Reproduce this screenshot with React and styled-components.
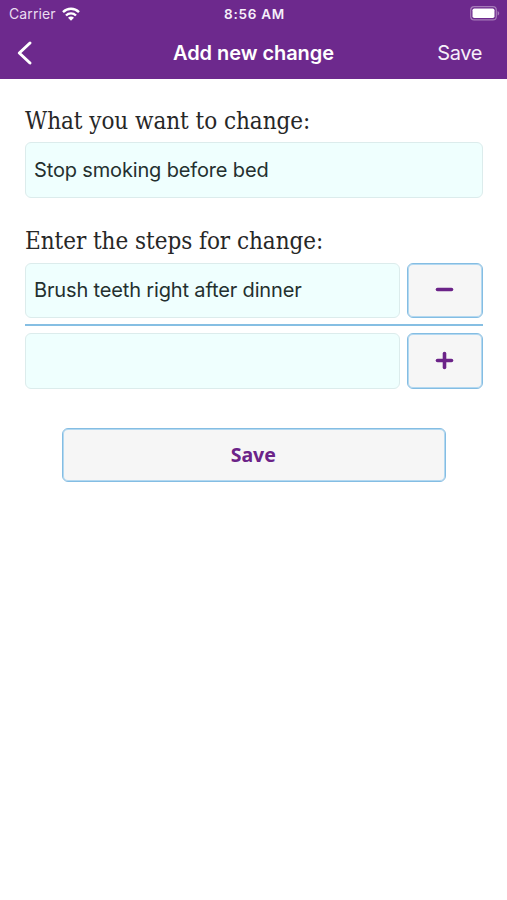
import React, { useState } from "react";
import styled, { createGlobalStyle } from "styled-components";

const GlobalStyle = createGlobalStyle`
  * {
    box-sizing: border-box;
  }

  body {
    margin: 0;
    background: #fff;
    font-family: Inter, "Liberation Sans", sans-serif;
  }

  button, input {
    font-family: inherit;
    margin: 0;
  }
`;

const Screen = styled.div`
  display: flex;
  flex-direction: column;
  min-height: 900px;
  background: #fff;
`;

// Purple area: status bar + navigation
const TopArea = styled.header`
  height: 79px;
  background: #6d298d;
  color: #fff;
`;

const StatusBar = styled.div`
  display: grid;
  grid-template-columns: 1fr auto 1fr;
  align-items: center;
  height: 27px;
  padding: 0 7px 0 9px;
  font-size: 14px;
`;

const Carrier = styled.div`
  display: flex;
  align-items: center;
  gap: 6px;
  color: #eadcf0;
  letter-spacing: 0.1px;
`;

const Clock = styled.div`
  font-weight: 600;
  font-size: 13.5px;
  letter-spacing: 0.75px;
  color: #f6effa;
`;

const BatteryIcon = styled.svg`
  justify-self: end;
  display: block;
`;

const NavBar = styled.nav`
  display: grid;
  grid-template-columns: 1fr auto 1fr;
  align-items: center;
  height: 51px;
  padding: 0 25px 0 16px;
`;

const BackButton = styled.button`
  display: flex;
  justify-self: start;
  padding: 0;
  border: none;
  background: none;
  cursor: pointer;
`;

const Title = styled.h1`
  margin: 0 0 0 -9px;
  transform: translateX(9px);
  font-size: 20px;
  font-weight: 600;
  letter-spacing: -0.05px;
  white-space: nowrap;
`;

const NavSave = styled.button`
  justify-self: end;
  padding: 0;
  border: none;
  background: none;
  color: #f6effa;
  font-size: 20px;
  letter-spacing: -0.4px;
  cursor: pointer;
`;

const Form = styled.form`
  display: flex;
  flex-direction: column;
  padding: 25px 24.5px 0 25px;
`;

const Label = styled.label`
  height: 34px;
  margin: ${({ $spaced }) => ($spaced ? "26px 0 5px" : "0 0 4px")};
  color: #272727;
  font-family: "DejaVu Serif Condensed", "DejaVu Serif", serif;
  font-stretch: condensed;
  font-size: 24px;
  letter-spacing: -0.05px;
  line-height: 34px;
  white-space: nowrap;
`;

const TextInput = styled.input`
  flex: 1;
  width: 100%;
  min-width: 0;
  height: 55.5px;
  flex-basis: auto;
  padding: 0 8px;
  border: 1px solid #dcecec;
  border-radius: 6px;
  outline: none;
  background: #effffe;
  color: #24302f;
  font-size: 20px;
  letter-spacing: -0.15px;
`;

const StepRow = styled.div`
  display: flex;
  gap: 7px;
  height: 55.5px;
`;

const Divider = styled.hr`
  width: 100%;
  height: 2px;
  margin: 6px 0 7px;
  border: none;
  background: #86bfe3;
`;

const OutlineButton = styled.button`
  display: flex;
  align-items: center;
  justify-content: center;
  border: 1px solid #84bde3;
  border-radius: 6px;
  background: #f6f6f6;
  box-shadow: inset 0 0 0 1px #b3d8f0;
  color: #6b2388;
  cursor: pointer;
`;

const StepButton = styled(OutlineButton)`
  flex: none;
  width: 75.5px;
  height: 55.5px;
  padding: 0 1px 1px 0;
`;

const SaveButton = styled(OutlineButton)`
  align-self: center;
  width: 384.5px;
  height: 54px;
  margin-top: 39px;
  padding: 0 1px 0 0;
  font-family: "Noto Sans", sans-serif;
  font-size: 19.5px;
  font-weight: 700;
`;

const WifiIcon = () => (
  <svg width="18" height="14" viewBox="0 0 18 14" fill="none" stroke="#fff" strokeWidth="2.4">
    <path d="M1 5.1C5.5 0.7 12.5 0.7 17 5.1" />
    <path d="M4 8.5C6.8 5.7 11.2 5.7 14 8.5" />
    <path d="M9 13.7L6 10.8C7.6 9.2 10.4 9.2 12 10.8Z" fill="#fff" stroke="none" />
  </svg>
);

const Battery = () => (
  <BatteryIcon width="30" height="15" viewBox="0 0 30 15">
    <rect x="0.7" y="0.7" width="25.6" height="13.2" rx="3.5" fill="none" stroke="#a67bb9" strokeWidth="1.2" />
    <rect x="2.5" y="2.5" width="22" height="9.6" rx="1.8" fill="#fff" />
    <path d="M27.6 5C29.7 5.8 29.7 8.8 27.6 9.6Z" fill="#a67bb9" />
  </BatteryIcon>
);

const BackIcon = () => (
  <svg width="17" height="26" viewBox="0 0 17 26" fill="none" stroke="#fff" strokeWidth="3" strokeLinecap="round" strokeLinejoin="round">
    <path d="M14 3L3.3 13L14 23" />
  </svg>
);

const StepIcon = ({ plus }) => (
  <svg width="19" height="19" viewBox="0 0 19 19" fill="none" stroke="#6b2388" strokeWidth="3.6" strokeLinecap="round">
    <path d="M2.5 9.5H16.5" />
    {plus && <path d="M9.5 2.5V16.5" />}
  </svg>
);

const App = () => {
  const [change, setChange] = useState("Stop smoking before bed");
  const [steps, setSteps] = useState(["Brush teeth right after dinner"]);
  const [newStep, setNewStep] = useState("");

  const updateStep = (index, value) => {
    setSteps(steps.map((step, i) => (i === index ? value : step)));
  };

  const removeStep = (index) => {
    setSteps(steps.filter((_, i) => i !== index));
  };

  const addStep = () => {
    if (!newStep.trim()) return;
    setSteps([...steps, newStep]);
    setNewStep("");
  };

  return (
    <Screen>
      <GlobalStyle />
      <TopArea>
        <StatusBar>
          <Carrier>
            Carrier
            <WifiIcon />
          </Carrier>
          <Clock>8:56 AM</Clock>
          <Battery />
        </StatusBar>
        <NavBar>
          <BackButton type="button" aria-label="Back">
            <BackIcon />
          </BackButton>
          <Title>Add new change</Title>
          <NavSave type="submit" form="change-form">Save</NavSave>
        </NavBar>
      </TopArea>

      <Form id="change-form" onSubmit={(e) => e.preventDefault()}>
        <Label htmlFor="change">What you want to change:</Label>
        <TextInput id="change" value={change} onChange={(e) => setChange(e.target.value)} />

        <Label htmlFor="new-step" $spaced>Enter the steps for change:</Label>
        {steps.map((step, index) => (
          <React.Fragment key={index}>
            <StepRow>
              <TextInput value={step} onChange={(e) => updateStep(index, e.target.value)} />
              <StepButton type="button" aria-label="Remove step" onClick={() => removeStep(index)}>
                <StepIcon />
              </StepButton>
            </StepRow>
            <Divider />
          </React.Fragment>
        ))}
        <StepRow>
          <TextInput id="new-step" value={newStep} onChange={(e) => setNewStep(e.target.value)} />
          <StepButton type="button" aria-label="Add step" onClick={addStep}>
            <StepIcon plus />
          </StepButton>
        </StepRow>

        <SaveButton type="submit">Save</SaveButton>
      </Form>
    </Screen>
  );
};

export default App;
